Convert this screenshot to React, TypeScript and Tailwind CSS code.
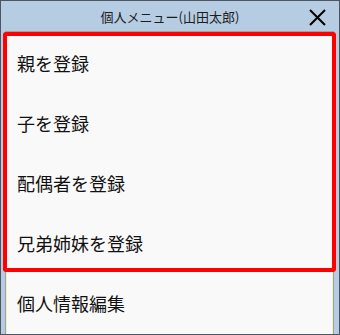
const items = ["親を登録", "子を登録", "配偶者を登録", "兄弟姉妹を登録", "個人情報編集"];

export default function App() {
  return (
    <div
      className="relative w-[340px] h-[335px] overflow-hidden border border-[#4d5561] bg-[#b6cce2] flex flex-col"
      style={{ fontFamily: '"Noto Sans CJK JP", "Noto Sans", sans-serif' }}
    >
      {/* title bar */}
      <div className="relative h-[30px] shrink-0 flex items-center justify-center">
        <span className="text-[13px] text-[#1c1c1c] leading-none">個人メニュー(山田太郎)</span>
        <button className="absolute right-[13px] top-[8px] w-[17px] h-[17px] text-black">
          <svg viewBox="0 0 17 17" width="17" height="17" fill="none" stroke="currentColor" strokeWidth="2">
            <path d="M1 1L16 16M16 1L1 16" />
          </svg>
        </button>
      </div>

      {/* list box */}
      <div className="ml-[4px] mr-[5px] flex-1 border-l border-r border-t border-[#a0a0a0]">
        <div className="h-full border-l border-r border-t border-[#f4efcf] bg-[#f9f9f9]">
          {items.map((label) => (
            <div
              key={label}
              className="h-[60px] flex items-center pl-[10px] text-[18px] text-[#111] leading-none"
            >
              {label}
            </div>
          ))}
        </div>
      </div>

      {/* red highlight */}
      <div className="absolute left-[2px] top-[31px] w-[333px] h-[240px] border-[4px] border-[#ff0000] rounded-[3px] pointer-events-none" />
    </div>
  );
}
